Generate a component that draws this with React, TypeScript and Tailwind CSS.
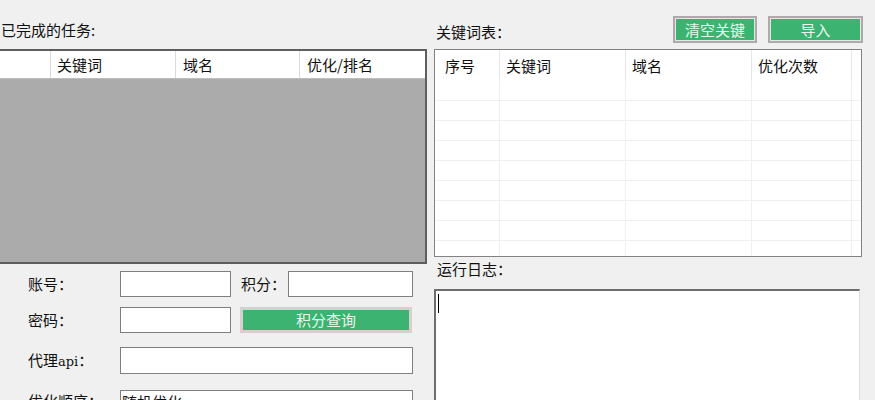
import React from "react";

const F = "font-['Noto_Sans_CJK_SC','Noto_Sans',sans-serif] text-[15px] leading-[20px] text-[#111]";

function Input({ w, h = 26, children }: { w: string; h?: number; children?: React.ReactNode }) {
  return (
    <div
      className={`${w} ${h === 27 ? "h-[27px]" : "h-[26px]"} shrink-0 border border-[#7f7f7f] bg-white flex items-start pl-[1px] overflow-hidden`}
    >
      {children}
    </div>
  );
}

function GreenBtn({ w, children }: { w: string; children: React.ReactNode }) {
  return (
    <div className={`${w} h-[27px] border-2 border-[#ababab] bg-[#e6e6e6] p-[1px]`}>
      <div className="h-full w-full bg-[#3cb371] flex items-center justify-center text-[#e9f7ee] leading-[18px]">
        {children}
      </div>
    </div>
  );
}

export default function App() {
  const rows = Array.from({ length: 9 });
  return (
    <div className={`${F} w-[875px] h-[400px] overflow-hidden bg-[#f0f0f0] flex items-start`}>
      {/* Left column */}
      <div className="w-[427px] flex flex-col shrink-0">
        <div className="h-[49px] shrink-0 pt-[20px] pl-[1px]">已完成的任务:</div>
        <div className="h-[215px] shrink-0 border-t-2 border-r-2 border-b-2 border-[#5e5e5e] flex flex-col">
          <div className="h-[28px] shrink-0 bg-white flex border-b border-[#bdbdbd]">
            <div className="w-[51px] border-r border-[#dadada]"></div>
            <div className="w-[125px] border-r border-[#dadada] pl-[6px] flex items-center">关键词</div>
            <div className="w-[124px] border-r border-[#dadada] pl-[7px] flex items-center">域名</div>
            <div className="flex-1 pl-[7px] flex items-center">优化/排名</div>
          </div>
          <div className="flex-1 bg-[#ababab]"></div>
        </div>

        {/* Form */}
        <div className="flex flex-col shrink-0 pl-[28px] mt-[7px]">
          <div className="flex items-center h-[26px] shrink-0">
            <div className="w-[92px] shrink-0">账号：</div>
            <Input w="w-[111px]" />
            <div className="w-[47px] ml-[10px] shrink-0">积分：</div>
            <Input w="w-[125px]" />
          </div>
          <div className="flex items-center h-[26px] shrink-0 mt-[10px]">
            <div className="w-[92px] shrink-0">密码：</div>
            <Input w="w-[111px]" />
            <div className="w-[172px] h-[26px] shrink-0 ml-[9px] border-[3px] border-[#d8cfcf] bg-[#3cb371] flex items-center justify-center text-[#e9f7ee] leading-[18px]">
              积分查询
            </div>
          </div>
          <div className="flex items-center h-[27px] shrink-0 mt-[14px]">
            <div className="w-[92px] shrink-0">
              代理<span className="font-['DejaVu_Serif',serif] text-[13px]">api</span>：
            </div>
            <Input w="w-[293px]" h={27} />
          </div>
          <div className="flex items-start h-[26px] shrink-0 mt-[16px]">
            <div className="w-[92px] shrink-0 mt-[1px]">优化顺序：</div>
            <Input w="w-[293px]">
              <span className="mt-[1px]">随机优化</span>
            </Input>
          </div>
        </div>
      </div>

      {/* Right column */}
      <div className="w-[429px] ml-[7px] flex flex-col shrink-0">
        <div className="h-[49px] shrink-0 flex items-start">
          <div className="mt-[22px] pl-[2px]">关键词表：</div>
          <div className="ml-auto mt-[16px] flex gap-[11px]">
            <GreenBtn w="w-[84px]">清空关键</GreenBtn>
            <GreenBtn w="w-[95px]">导入</GreenBtn>
          </div>
        </div>
        <div className="w-[428px] h-[208px] shrink-0 border border-[#828282] bg-white flex flex-col overflow-hidden">
          <div className="h-[31px] flex shrink-0">
            <div className="w-[65px] border-r border-[#e5e5e5] pl-[10px] flex items-center">序号</div>
            <div className="w-[126px] border-r border-[#e5e5e5] pl-[6px] flex items-center">关键词</div>
            <div className="w-[126px] border-r border-[#e5e5e5] pl-[6px] flex items-center">域名</div>
            <div className="w-[100px] border-r border-[#e5e5e5] pl-[6px] flex items-center">优化次数</div>
            <div className="flex-1"></div>
          </div>
          {rows.map((_, i) => (
            <div key={i} className="h-[20px] flex shrink-0 border-b border-[#efefef]">
              <div className="w-[65px] border-r border-[#efefef]"></div>
              <div className="w-[126px] border-r border-[#efefef]"></div>
              <div className="w-[126px] border-r border-[#efefef]"></div>
              <div className="w-[100px] border-r border-[#efefef]"></div>
              <div className="flex-1"></div>
            </div>
          ))}
        </div>
        <div className="h-[32px] shrink-0 pt-[2px] pl-[3px]">运行日志：</div>
        <div className="w-[426px] h-[130px] shrink-0 border-t-2 border-l-2 border-[#6d6d6d] border-r border-r-[#dcdcdc] bg-white">
          <div className="ml-[2px] mt-[3px] w-[1px] h-[19px] bg-black"></div>
        </div>
      </div>
    </div>
  );
}
